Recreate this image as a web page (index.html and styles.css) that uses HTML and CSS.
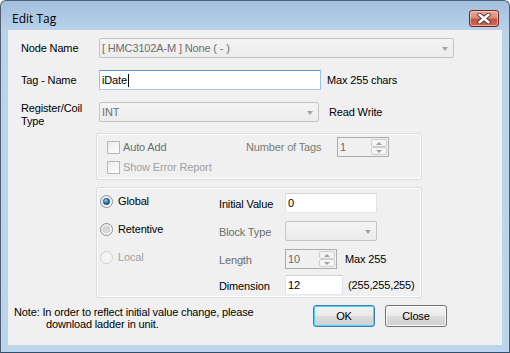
FILE: index.html
```html
<!DOCTYPE html>
<html>
<head>
<meta charset="utf-8">
<title>Edit Tag</title>
<link rel="stylesheet" href="styles.css">
</head>
<body>
<div class="window">
  <div class="titlebar">
    <span class="title">Edit Tag</span>
    <div class="close">
      <svg width="14" height="11" viewBox="0 0 14 11">
        <path d="M2.5 1.8 L11.5 9.2 M11.5 1.8 L2.5 9.2" stroke="#5a3030" stroke-width="4.4" stroke-linecap="round"/>
        <path d="M2.5 1.8 L11.5 9.2 M11.5 1.8 L2.5 9.2" stroke="#ffffff" stroke-width="2.6" stroke-linecap="round"/>
      </svg>
    </div>
  </div>
  <div class="client">
    <div class="row">
      <span class="lbl">Node Name</span>
      <div class="combo w355"><span class="ctext">[ HMC3102A-M ] None ( - )</span><i class="arrow"></i></div>
    </div>
    <div class="row">
      <span class="lbl">Tag - Name</span>
      <div class="tb focus w222"><span>iDate</span><span class="caret"></span></div>
      <span class="side s6">Max 255 chars</span>
    </div>
    <div class="row r3">
      <span class="lbl two">Register/Coil<br>Type</span>
      <div class="combo w220"><span class="ctext">INT</span><i class="arrow"></i></div>
      <span class="side s10">Read Write</span>
    </div>

    <div class="group g1">
      <div class="grow">
        <div class="chk-item"><span class="chk"></span><span class="t-mid">Auto Add</span></div>
        <span class="nlbl">Number of Tags</span>
        <div class="spin w52"><span class="stext">1</span><div class="spinbtns"><b><i class="up"></i></b><b><i class="dn"></i></b></div></div>
      </div>
      <div class="grow">
        <div class="chk-item"><span class="chk"></span><span class="t-light">Show Error Report</span></div>
      </div>
    </div>

    <div class="group g2">
      <div class="radios">
        <div class="ritem">
          <svg class="radio" width="13" height="13" viewBox="0 0 13 13">
            <defs>
              <linearGradient id="rg" x1="0" y1="0" x2="1" y2="1"><stop offset="0" stop-color="#e6e6e6"/><stop offset="1" stop-color="#ffffff"/></linearGradient>
              <radialGradient id="dot" cx="0.4" cy="0.35" r="0.7"><stop offset="0" stop-color="#a6d8f5"/><stop offset="0.5" stop-color="#2a7bc0"/><stop offset="1" stop-color="#0e3d6b"/></radialGradient>
            </defs>
            <circle cx="6.5" cy="6.5" r="6" fill="url(#rg)" stroke="#8e8f8f"/>
            <circle cx="6.5" cy="6.5" r="3.2" fill="url(#dot)" stroke="#1d4f7e" stroke-width="0.6"/>
          </svg>
          <span>Global</span>
        </div>
        <div class="ritem">
          <svg class="radio" width="13" height="13" viewBox="0 0 13 13">
            <circle cx="6.5" cy="6.5" r="6" fill="url(#rg)" stroke="#8e8f8f"/>
            <circle cx="6.5" cy="6.5" r="3.5" fill="#d6d6d6" stroke="#c8c8c8" stroke-width="0.6"/>
          </svg>
          <span>Retentive</span>
        </div>
        <div class="ritem">
          <svg class="radio" width="13" height="13" viewBox="0 0 13 13">
            <circle cx="6.5" cy="6.5" r="6" fill="#f4f4f4" stroke="#d0d0d0"/>
          </svg>
          <span class="t-light">Local</span>
        </div>
      </div>
      <div class="fields">
        <div class="frow f1">
          <span class="flbl">Initial Value</span>
          <div class="tb w92"><span>0</span></div>
        </div>
        <div class="frow f2">
          <span class="flbl t-mid">Block Type</span>
          <div class="combo w92"><span class="ctext"></span><i class="arrow"></i></div>
        </div>
        <div class="frow f3">
          <span class="flbl t-mid">Length</span>
          <div class="spin w52"><span class="stext">10</span><div class="spinbtns"><b><i class="up"></i></b><b><i class="dn"></i></b></div></div>
          <span class="side s8">Max 255</span>
        </div>
        <div class="frow f4">
          <span class="flbl">Dimension</span>
          <div class="tb w58"><span>12</span></div>
          <span class="side s5">(255,255,255)</span>
        </div>
      </div>
    </div>

    <div class="footer">
      <div class="note">
        <div>Note: In order to reflect initial value change, please</div>
        <div class="indent">download ladder in unit.</div>
      </div>
      <div class="btn default">OK</div>
      <div class="btn">Close</div>
    </div>
  </div>
</div>
</body>
</html>
```

FILE: styles.css
```css
html, body {
  margin: 0;
  padding: 0;
  background: #ffffff;
}

.window {
  width: 510px;
  height: 353px;
  box-sizing: border-box;
  border: 1px solid #4e5f73;
  border-bottom-color: #2f4f6c;
  border-radius: 6px 6px 0 0;
  background: linear-gradient(#a2bfdc 0px, #b3cde8 22px, #bad3eb 30px, #bcd4ec 100%);
  display: flex;
  flex-direction: column;
  font-family: "Liberation Sans", Arial, sans-serif;
  font-size: 11px;
  letter-spacing: -0.15px;
  color: #000;
}

.titlebar {
  height: 29px;
  flex: none;
  display: flex;
  justify-content: space-between;
  align-items: flex-start;
  padding: 0 10px 0 11px;
}

.title {
  font-family: "Open Sans", "Liberation Sans", sans-serif;
  font-size: 12px;
  letter-spacing: 0;
  line-height: 16px;
  margin-top: 10px;
  color: #000;
}

.close {
  margin-top: 9px;
  width: 30px;
  height: 17px;
  box-sizing: border-box;
  border: 1px solid #6e2b2b;
  border-radius: 3px;
  background: linear-gradient(#e9a99b 0%, #d98d7c 45%, #c6513f 55%, #cf6b52 100%);
  box-shadow: inset 0 0 0 1px rgba(255, 220, 210, 0.55);
  display: flex;
  align-items: center;
  justify-content: center;
}

.client {
  margin: 0 7px;
  height: 315px;
  flex: none;
  box-sizing: border-box;
  background: #f0f0f0;
  padding-top: 8px;
  display: flex;
  flex-direction: column;
}

.row {
  display: flex;
  align-items: center;
  height: 20px;
  padding-left: 13px;
  margin-bottom: 12px;
  flex: none;
}

.row.r3 {
  margin-bottom: 11px;
}

.lbl {
  width: 78px;
  flex: none;
}

.lbl.two {
  align-self: flex-start;
  line-height: 13px;
  margin-top: 0;
}

.side {
  white-space: nowrap;
}

.s5 { margin-left: 5px; }
.s6 { margin-left: 6px; }
.s8 { margin-left: 8px; }
.s10 { margin-left: 10px; }

.w355 { width: 355px; }
.w222 { width: 222px; }
.w220 { width: 220px; }
.w92 { width: 92px; }
.w52 { width: 52px; }
.w58 { width: 58px; }

.combo {
  height: 20px;
  box-sizing: border-box;
  border: 1px solid #c5c5c5;
  border-radius: 2px;
  background: linear-gradient(#f4f4f4, #ececec);
  display: flex;
  align-items: center;
  padding: 0 5px 0 2px;
  color: #6d6d6d;
  flex: none;
}

.ctext {
  flex: 1;
  white-space: nowrap;
  overflow: hidden;
}

.arrow {
  width: 0;
  height: 0;
  border-left: 3.5px solid transparent;
  border-right: 3.5px solid transparent;
  border-top: 4px solid #a3a3a3;
  margin-top: 1px;
}

.tb {
  height: 20px;
  box-sizing: border-box;
  border: 1px solid;
  border-color: #d4d4d4 #e2e3ea #e3e9ef #e2e3ea;
  background: #fff;
  display: flex;
  align-items: center;
  padding: 0 2px;
  flex: none;
}

.tb.focus {
  border-color: #5b97cf #9ec3e6 #a9cbea #9ec3e6;
}

.caret {
  width: 1px;
  height: 13px;
  background: #000;
  margin-left: 1px;
}

.group {
  margin-left: 88px;
  width: 326px;
  box-sizing: border-box;
  border: 1px solid #d5dfe5;
  border-radius: 3px;
  box-shadow: inset 0 0 0 1px #ffffff;
  flex: none;
}

.g1 {
  height: 47px;
  padding: 3px 0 0 10px;
  margin-bottom: 7px;
}

.grow {
  display: flex;
  align-items: center;
  height: 20px;
}

.chk-item {
  width: 139px;
  display: flex;
  align-items: center;
  flex: none;
}

.chk {
  width: 13px;
  height: 13px;
  box-sizing: border-box;
  border: 1px solid #b8b8b8;
  background: linear-gradient(135deg, #ececec, #fdfdfd);
  margin-right: 3px;
  flex: none;
}

.t-mid { color: #6d6d6d; }
.t-light { color: #a0a0a0; }

.nlbl {
  width: 91px;
  color: #7a7a7a;
  flex: none;
}

.spin {
  height: 20px;
  box-sizing: border-box;
  border: 1px solid #acacac;
  background: #f0f0f0;
  display: flex;
  align-items: stretch;
  color: #6d6d6d;
  flex: none;
}

.stext {
  flex: 1;
  padding-left: 2px;
  display: flex;
  align-items: center;
}

.spinbtns {
  width: 16px;
  display: flex;
  flex-direction: column;
  padding: 1px 1px 1px 0;
  gap: 0;
}

.spinbtns b {
  flex: 1;
  box-sizing: border-box;
  border: 1px solid #cfcfcf;
  border-radius: 2px;
  background: #f4f4f4;
  display: flex;
  align-items: center;
  justify-content: center;
}

.up, .dn {
  width: 0;
  height: 0;
  border-left: 3px solid transparent;
  border-right: 3px solid transparent;
}

.up { border-bottom: 3px solid #a0a0a0; }
.dn { border-top: 3px solid #a0a0a0; }

.g2 {
  height: 111px;
  display: flex;
  padding-top: 3px;
  margin-bottom: 7px;
}

.radios {
  width: 122px;
  padding-left: 3px;
  box-sizing: border-box;
  display: flex;
  flex-direction: column;
  gap: 8px;
  flex: none;
}

.ritem {
  height: 20px;
  display: flex;
  align-items: center;
}

.radio {
  flex: none;
  margin-right: 5px;
}

.fields {
  display: flex;
  flex-direction: column;
  padding-top: 2px;
}

.frow {
  display: flex;
  align-items: center;
  height: 20px;
}

.f2, .f3 { margin-top: 8px; }
.f4 { margin-top: 6px; }

.flbl {
  width: 66px;
  flex: none;
  position: relative;
  top: 1px;
}

.footer {
  display: flex;
  align-items: flex-start;
  padding-left: 6px;
}

.note {
  width: 299px;
  line-height: 12px;
  padding-top: 1px;
  flex: none;
}

.indent {
  padding-left: 32px;
}

.btn {
  width: 62px;
  height: 22px;
  box-sizing: border-box;
  border: 1px solid #707070;
  border-radius: 3px;
  background: linear-gradient(#f2f2f2 0%, #ebebeb 50%, #dddddd 51%, #cfcfcf 100%);
  box-shadow: inset 0 0 0 1px #fcfcfc;
  display: flex;
  align-items: center;
  justify-content: center;
  margin-right: 10px;
  flex: none;
}

.btn.default {
  border-color: #3c7fb1;
  box-shadow: inset 0 0 0 1px #48d8fb;
}
```
